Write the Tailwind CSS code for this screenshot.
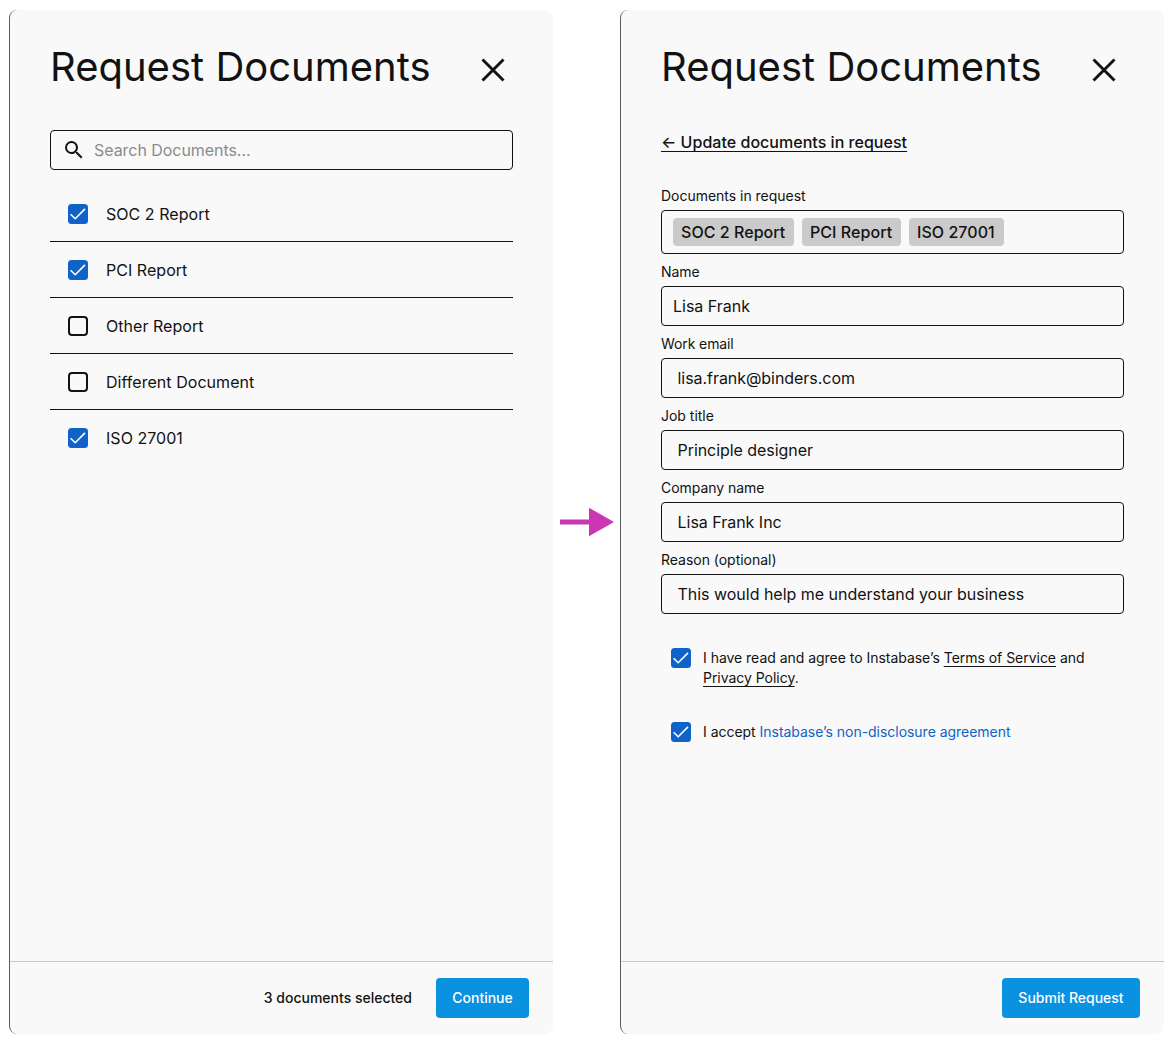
<!DOCTYPE html>
<html lang="en">
<head>
<meta charset="utf-8">
<title>Request Documents</title>
<script src="https://cdn.jsdelivr.net/npm/@tailwindcss/browser@4"></script>
</head>
<body class="bg-white font-['Inter',sans-serif] text-[#121212]">
<svg class="hidden">
  <symbol id="close" viewBox="0 0 24 24"><path d="M1.5 1.5L22.5 22.5M22.5 1.5L1.5 22.5" stroke="currentColor" stroke-width="2.9" fill="none"/></symbol>
  <symbol id="checked" viewBox="0 0 20 20"><rect width="20" height="20" rx="3.5" fill="#0f62c8"/><path d="M2.6 10.2L7.2 14.7L17 4.9" stroke="#fff" stroke-width="1.6" fill="none"/></symbol>
  <symbol id="unchecked" viewBox="0 0 20 20"><rect x="1" y="1" width="18" height="18" rx="3" fill="none" stroke="#121212" stroke-width="2"/></symbol>
</svg>
<main class="flex items-center pl-[9px] pt-[10px]">
  <section class="flex h-[1024px] w-[544px] flex-none flex-col rounded-lg border-l border-[#5c5c5c] bg-[#f9f9f9]">
    <div class="flex-1 pl-10 pr-10">
      <header class="flex h-[120px] items-start justify-between pr-2 pt-8">
        <h1 class="text-[40px] leading-[50px] font-normal whitespace-nowrap">Request Documents</h1>
        <svg class="mt-4 size-6"><use href="#close"/></svg>
      </header>
      <div class="flex h-10 items-center rounded border border-[#121212] pl-[11px]">
        <svg class="size-6" viewBox="0 0 24 24" fill="currentColor"><path d="M15.5 14h-.79l-.28-.27A6.47 6.47 0 0 0 16 9.5 6.5 6.5 0 1 0 9.5 16c1.61 0 3.09-.59 4.23-1.57l.27.28v.79l5 4.99L20.49 19l-4.99-5zm-6 0C7.01 14 5 11.99 5 9.5S7.01 5 9.5 5 14 7.01 14 9.5 11.99 14 9.5 14z"/></svg>
        <span class="ml-2 text-base tracking-[-0.05px] text-[#8b8b8b]">Search Documents...</span>
      </div>
      <ul class="pt-4 text-base tracking-[0.04px]">
        <li class="flex h-14 items-center gap-[18px] border-b border-[#121212] pl-[18px]"><svg class="size-5"><use href="#checked"/></svg><span>SOC 2 Report</span></li>
        <li class="flex h-14 items-center gap-[18px] border-b border-[#121212] pl-[18px]"><svg class="size-5"><use href="#checked"/></svg><span>PCI Report</span></li>
        <li class="flex h-14 items-center gap-[18px] border-b border-[#121212] pl-[18px]"><svg class="size-5"><use href="#unchecked"/></svg><span>Other Report</span></li>
        <li class="flex h-14 items-center gap-[18px] border-b border-[#121212] pl-[18px]"><svg class="size-5"><use href="#unchecked"/></svg><span>Different Document</span></li>
        <li class="flex h-14 items-center gap-[18px] pl-[18px]"><svg class="size-5"><use href="#checked"/></svg><span>ISO 27001</span></li>
      </ul>
    </div>
    <footer class="flex h-[73px] items-center justify-end gap-6 border-t border-[#c8c8c8] pr-6 text-sm font-medium">
      <span>3 documents selected</span>
      <button class="h-10 w-[93px] rounded bg-[#0a91df] text-white">Continue</button>
    </footer>
  </section>

  <div class="flex w-[67px] flex-none justify-center">
    <svg class="h-[30px] w-[54px]" viewBox="0 0 54 30" fill="#cb37b3"><path d="M0 12.5H29V.7L54 15L29 29.3V17.5H0Z"/></svg>
  </div>

  <section class="flex h-[1024px] w-[544px] flex-none flex-col rounded-lg border-l border-[#5c5c5c] bg-[#f9f9f9]">
    <div class="flex-1 pl-10 pr-10">
      <header class="flex h-[120px] items-start justify-between pr-2 pt-8">
        <h1 class="text-[40px] leading-[50px] font-normal whitespace-nowrap">Request Documents</h1>
        <svg class="mt-4 size-6"><use href="#close"/></svg>
      </header>
      <a class="flex h-[58px] text-base font-medium tracking-[0.03px]"><span class="h-6 underline decoration-1 underline-offset-3">← Update documents in request</span></a>
      <form class="text-base">
        <label class="block text-sm leading-4 tracking-[-0.02px]">Documents in request</label>
        <div class="mt-[6px] mb-[10px] flex h-11 items-center gap-2 rounded border border-[#121212] pl-[11px] font-medium whitespace-nowrap">
          <span class="flex h-7 w-[121px] items-center rounded bg-[#cacaca] px-2 tracking-[0.05px]">SOC 2 Report</span>
          <span class="flex h-7 w-[99px] items-center rounded bg-[#cacaca] px-2 tracking-[0.05px]">PCI Report</span>
          <span class="flex h-7 w-[95px] items-center rounded bg-[#cacaca] px-2 tracking-[0.05px]">ISO 27001</span>
        </div>
        <label class="block text-sm leading-4 tracking-[-0.02px]">Name</label>
        <div class="mt-[6px] mb-[10px] flex h-10 items-center rounded border border-[#121212] pl-[11px]">Lisa Frank</div>
        <label class="block text-sm leading-4 tracking-[-0.1px]">Work email</label>
        <div class="mt-[6px] mb-[10px] flex h-10 items-center rounded border border-[#121212] pl-[15.5px] tracking-[-0.05px]">lisa.frank@binders.com</div>
        <label class="block text-sm leading-4 tracking-[-0.02px]">Job title</label>
        <div class="mt-[6px] mb-[10px] flex h-10 items-center rounded border border-[#121212] pl-[15.5px] tracking-[-0.05px]">Principle designer</div>
        <label class="block text-sm leading-4 tracking-[-0.05px]">Company name</label>
        <div class="mt-[6px] mb-[10px] flex h-10 items-center rounded border border-[#121212] pl-[15.5px] tracking-[-0.02px]">Lisa Frank Inc</div>
        <label class="block text-sm leading-4 tracking-[-0.02px]">Reason (optional)</label>
        <div class="mt-[6px] flex h-10 items-center rounded border border-[#121212] pl-[15.5px] tracking-[-0.02px]">This would help me understand your business</div>
      </form>
      <div class="mt-[34px] flex gap-3 pl-[10px] text-sm tracking-[-0.03px]">
        <svg class="size-5 flex-none"><use href="#checked"/></svg>
        <p class="whitespace-nowrap">I have read and agree to Instabase’s <a class="underline decoration-1 underline-offset-3">Terms of Service</a> and<br><a class="underline decoration-1 underline-offset-3">Privacy Policy</a>.</p>
      </div>
      <div class="mt-[34px] flex gap-3 pl-[10px] text-sm tracking-[-0.03px]">
        <svg class="size-5 flex-none"><use href="#checked"/></svg>
        <p class="whitespace-nowrap">I accept <a class="text-[#0f62c8]">Instabase’s non-disclosure agreement</a></p>
      </div>
    </div>
    <footer class="flex h-[73px] items-center justify-end border-t border-[#c8c8c8] pr-6 text-sm font-medium">
      <button class="h-10 w-[138px] rounded bg-[#0a91df] text-white">Submit Request</button>
    </footer>
  </section>
</main>
</body>
</html>
